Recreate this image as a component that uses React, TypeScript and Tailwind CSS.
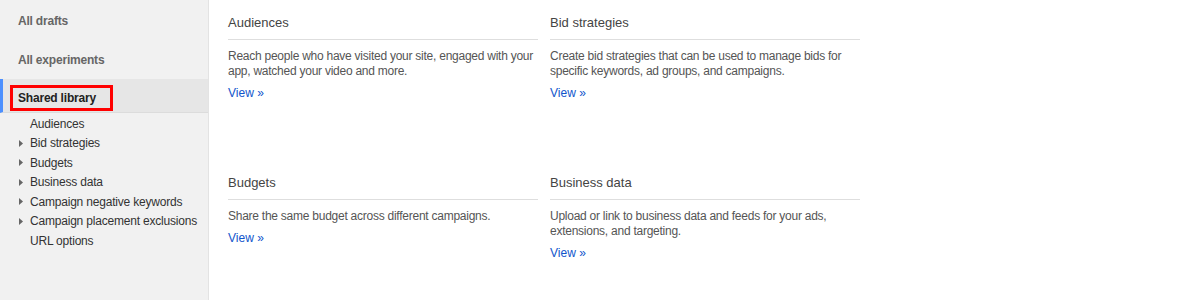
const treeItems = [
  { label: "Audiences", expandable: false },
  { label: "Bid strategies", expandable: true },
  { label: "Budgets", expandable: true },
  { label: "Business data", expandable: true },
  { label: "Campaign negative keywords", expandable: true },
  { label: "Campaign placement exclusions", expandable: true },
  { label: "URL options", expandable: false },
];

const cards = [
  {
    title: "Audiences",
    text: "Reach people who have visited your site, engaged with your app, watched your video and more.",
  },
  {
    title: "Bid strategies",
    text: "Create bid strategies that can be used to manage bids for specific keywords, ad groups, and campaigns.",
  },
  {
    title: "Budgets",
    text: "Share the same budget across different campaigns.",
  },
  {
    title: "Business data",
    text: "Upload or link to business data and feeds for your ads, extensions, and targeting.",
  },
];

function Caret() {
  return (
    <svg width="4" height="7" viewBox="0 0 4 7" className="shrink-0">
      <path d="M0 0 L4 3.5 L0 7 Z" fill="#666" />
    </svg>
  );
}

export default function App() {
  return (
    <div className="flex h-[300px] w-[1200px] overflow-hidden bg-white font-['Liberation_Sans',Arial,sans-serif]">
      <aside className="w-[209px] shrink-0 border-r border-[#e3e3e3] bg-[#f1f1f1]">
        <div className="flex h-[41px] items-center pl-[18px] text-[12px] font-bold tracking-[-0.2px] text-[#666]">
          All drafts
        </div>
        <div className="flex h-[38px] items-center pl-[18px] text-[12px] font-bold tracking-[-0.2px] text-[#666]">
          All experiments
        </div>
        <div className="flex h-[34px] items-center border-b border-[#dcdcdc] border-l-[3px] border-l-[#4d90fe] bg-[#e6e6e6] pl-[7px] pt-[5px]">
          <span className="border-[3px] border-[#f00] pl-[5px] pr-[14px] text-[12px] font-bold leading-[20px] tracking-[-0.2px] text-[#222]">
            Shared library
          </span>
        </div>
        <ul className="pt-[1px]">
          {treeItems.map((item) => (
            <li
              key={item.label}
              className="flex h-[19.5px] items-center text-[12px] tracking-[-0.2px] text-[#333]"
            >
              <span className="flex w-[30px] justify-end pr-[7px]">
                {item.expandable && <Caret />}
              </span>
              {item.label}
            </li>
          ))}
        </ul>
      </aside>

      <main className="grid grid-cols-[310px_310px] grid-rows-[160px_140px] gap-x-[12px] pl-[19px]">
        {cards.map((card) => (
          <section key={card.title} className="pt-[14px]">
            <h2 className="border-b border-[#dedede] pb-[7px] text-[13px] leading-[18px] text-[#444]">
              {card.title}
            </h2>
            <p className="mt-[9px] text-[12px] leading-[15px] tracking-[-0.25px] text-[#555]">
              {card.text}
            </p>
            <a
              href="#"
              className="mt-[7px] block text-[12px] leading-[15px] text-[#15c]"
            >
              View »
            </a>
          </section>
        ))}
      </main>
    </div>
  );
}
